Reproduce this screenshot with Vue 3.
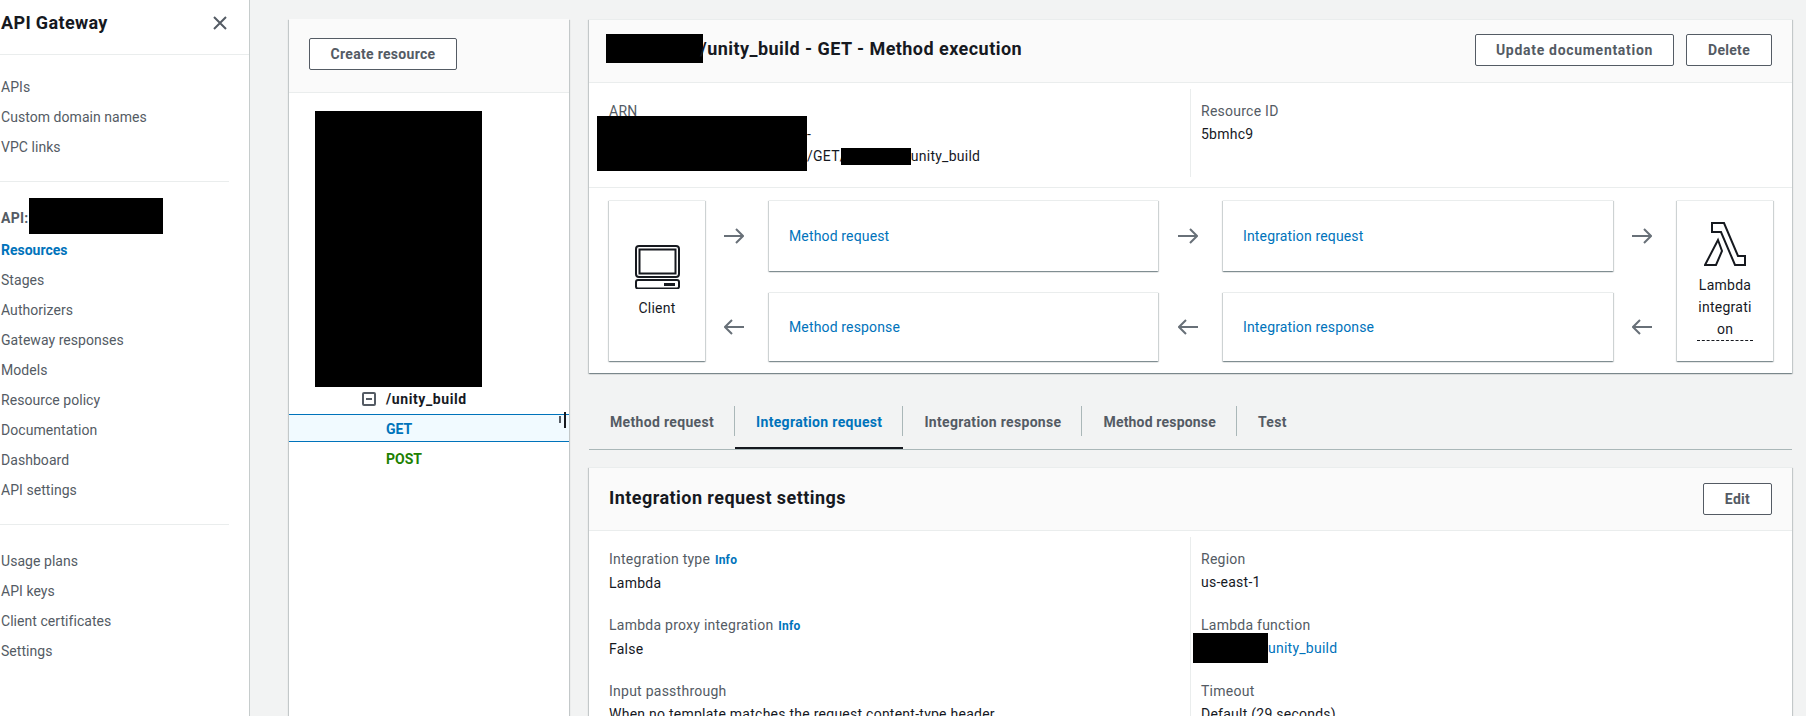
<script setup>
/**
 * API Gateway console: resource tree on the left, GET method execution on the right.
 * Black blocks stand for the redactions in the source picture.
 */
const navTop = ['APIs', 'Custom domain names', 'VPC links']
const navApi = [
  'Resources',
  'Stages',
  'Authorizers',
  'Gateway responses',
  'Models',
  'Resource policy',
  'Documentation',
  'Dashboard',
  'API settings',
]
const navBottom = ['Usage plans', 'API keys', 'Client certificates', 'Settings']

const tabs = ['Method request', 'Integration request', 'Integration response', 'Method response', 'Test']
const activeTab = 'Integration request'

const leftFields = [
  { label: 'Integration type', info: true, value: 'Lambda' },
  { label: 'Lambda proxy integration', info: true, value: 'False' },
  { label: 'Input passthrough', value: 'When no template matches the request content-type header' },
]
</script>

<template>
  <div class="page">
    <aside class="sidebar">
      <header class="side-head">
        <span class="side-title">API Gateway</span>
        <svg class="close" width="14" height="14" viewBox="0 0 14 14">
          <path d="M1 1l12 12M13 1L1 13" />
        </svg>
      </header>
      <nav class="side-section">
        <a v-for="item in navTop" :key="item" class="nav-item">{{ item }}</a>
      </nav>
      <div class="side-rule" />
      <nav class="side-section">
        <div class="api-row">
          <b>API:</b>
          <span class="api-redact" />
        </div>
        <a
          v-for="item in navApi"
          :key="item"
          class="nav-item"
          :class="{ 'nav-item--active': item === 'Resources' }"
        >{{ item }}</a>
      </nav>
      <div class="side-rule" />
      <nav class="side-section">
        <a v-for="item in navBottom" :key="item" class="nav-item">{{ item }}</a>
      </nav>
    </aside>

    <main class="content">
      <section class="tree-panel">
        <div class="tree-head">
          <button class="btn btn--create">Create resource</button>
        </div>
        <div class="tree-redact" />
        <div class="tree-row tree-row--res">
          <svg class="tree-toggle" width="14" height="14" viewBox="0 0 14 14">
            <rect x="1" y="1" width="12" height="12" rx="1" />
            <path d="M4 7h6" />
          </svg>
          <span>/unity_build</span>
        </div>
        <div class="tree-row tree-row--get">
          GET
          <span class="resize-mark" />
        </div>
        <div class="tree-row tree-row--post">POST</div>
      </section>

      <div class="detail">
        <section class="panel">
          <header class="panel-head">
            <div class="exec-title">
              <span class="title-redact" />
              <h2>/unity_build - GET - Method execution</h2>
            </div>
            <div class="actions">
              <button class="btn btn--doc">Update documentation</button>
              <button class="btn btn--delete">Delete</button>
            </div>
          </header>

          <div class="summary">
            <div class="summary-col summary-col--arn">
              <div class="label">ARN</div>
              <div class="arn-line"><span class="arn-gap" />-</div>
              <div class="arn-line">
                <span class="arn-gap" />/GET/<span class="arn-redact" />unity_build
              </div>
              <span class="arn-cover" />
            </div>
            <div class="summary-col summary-col--id">
              <div class="label">Resource ID</div>
              <div class="value">5bmhc9</div>
            </div>
          </div>

          <div class="flow">
            <div class="card card--end card--client">
              <svg class="client-icon" width="45" height="44" viewBox="0 0 45 44">
                <rect x="1" y="1" width="43" height="31" rx="3" />
                <rect x="4.5" y="4.5" width="36" height="24" />
                <rect x="1" y="35" width="43" height="8.5" rx="2" />
                <rect class="slot" x="29" y="38" width="11" height="3" />
              </svg>
              <span>Client</span>
            </div>
            <svg class="arrow" width="20" height="16" viewBox="0 0 20 16"><path d="M0 8h19M12 1l7 7-7 7" /></svg>
            <a class="card card--step">Method request</a>
            <svg class="arrow" width="20" height="16" viewBox="0 0 20 16"><path d="M0 8h19M12 1l7 7-7 7" /></svg>
            <a class="card card--step">Integration request</a>
            <svg class="arrow" width="20" height="16" viewBox="0 0 20 16"><path d="M0 8h19M12 1l7 7-7 7" /></svg>
            <div class="card card--end card--lambda">
              <svg class="lambda-icon" width="42" height="44" viewBox="0 0 42 44">
                <path d="M8 1H20L34 34H41V43H31L17 10H8ZM14 18L18 29L12 43H1Z" />
              </svg>
              <span class="lambda-name">Lambda integration</span>
            </div>
            <svg class="arrow" width="20" height="16" viewBox="0 0 20 16"><path d="M20 8H1M8 1L1 8l7 7" /></svg>
            <a class="card card--step">Method response</a>
            <svg class="arrow" width="20" height="16" viewBox="0 0 20 16"><path d="M20 8H1M8 1L1 8l7 7" /></svg>
            <a class="card card--step">Integration response</a>
            <svg class="arrow" width="20" height="16" viewBox="0 0 20 16"><path d="M20 8H1M8 1L1 8l7 7" /></svg>
          </div>
        </section>

        <div class="tabs">
          <div
            v-for="tab in tabs"
            :key="tab"
            class="tab"
            :class="{ 'tab--active': tab === activeTab }"
          >
            <span class="tab-label">{{ tab }}</span>
          </div>
        </div>

        <section class="panel panel--settings">
          <header class="panel-head">
            <h2>Integration request settings</h2>
            <button class="btn btn--edit">Edit</button>
          </header>
          <div class="settings">
            <div class="settings-col settings-col--left">
              <div v-for="field in leftFields" :key="field.label" class="field">
                <div class="label">
                  {{ field.label }}
                  <a v-if="field.info" class="info">Info</a>
                </div>
                <div class="value">{{ field.value }}</div>
              </div>
            </div>
            <div class="settings-col settings-col--right">
              <div class="field">
                <div class="label">Region</div>
                <div class="value">us-east-1</div>
              </div>
              <div class="field">
                <div class="label">Lambda function</div>
                <div class="value value--link">
                  <span class="fn-redact" />
                  <a>unity_build</a>
                </div>
              </div>
              <div class="field">
                <div class="label">Timeout</div>
                <div class="value">Default (29 seconds)</div>
              </div>
            </div>
          </div>
        </section>
      </div>
    </main>
  </div>
</template>

<style>
html,
body {
  margin: 0;
  background: #f2f3f3;
}
</style>

<style scoped>
.page {
  display: flex;
  height: 716px;
  overflow: hidden;
  background: #f2f3f3;
  color: #16191f;
  font-family: Roboto, "Noto Sans", sans-serif;
  font-size: 14px;
  line-height: 22px;
  letter-spacing: 0.25px;
}

h2 {
  margin: 0 0 2px;
  font-size: 18px;
  font-weight: 700;
  line-height: 26px;
  letter-spacing: 0.45px;
  color: #16191f;
}

/* Side navigation */
.sidebar {
  flex: none;
  width: 250px;
  box-sizing: border-box;
  padding-left: 1px;
  background: #fff;
  border-right: 1px solid #c6cccc;
}

.side-head {
  display: flex;
  align-items: center;
  justify-content: space-between;
  height: 55px;
  margin-left: -1px;
  padding: 0 22px 8px 1px;
  box-sizing: border-box;
  border-bottom: 1px solid #eaeded;
}

.side-title {
  font-size: 18px;
  font-weight: 700;
  letter-spacing: 0.35px;
}

.close path {
  fill: none;
  stroke: #545b64;
  stroke-width: 2;
}

.side-section {
  display: flex;
  flex-direction: column;
  padding: 16px 0 20px;
}

.side-section + .side-rule + .side-section {
  padding-top: 20px;
}

.side-rule {
  width: 229px;
  margin-left: -1px;
  border-top: 1px solid #eaeded;
}

.nav-item {
  height: 30px;
  line-height: 32px;
  color: #545b64;
  letter-spacing: 0.05px;
}

.nav-item--active {
  color: #0073bb;
  font-weight: 700;
  letter-spacing: 0;
}

.api-row {
  position: relative;
  height: 32px;
  line-height: 32px;
  color: #545b64;
}

.api-redact {
  position: absolute;
  left: 28px;
  top: -4px;
  width: 134px;
  height: 36px;
  background: #000;
}

/* Main area */
.content {
  flex: 1;
  display: flex;
  gap: 20px;
  padding: 19px 14px 0 39px;
  min-width: 0;
}

.tree-panel {
  flex: none;
  width: 280px;
  height: 740px;
  background: #fff;
  box-shadow: 0 1px 1px rgba(0, 28, 36, 0.3), 1px 1px 1px rgba(0, 28, 36, 0.15), -1px 1px 1px rgba(0, 28, 36, 0.15);
}

.tree-head {
  height: 74px;
  padding: 19px 20px 0;
  box-sizing: border-box;
  background: #fafafa;
  border-bottom: 1px solid #eaeded;
}

.tree-redact {
  width: 167px;
  height: 276px;
  margin: 18px 0 0 26px;
  background: #000;
}

.tree-row {
  position: relative;
  display: flex;
  align-items: center;
  padding-left: 97px;
  font-weight: 700;
  letter-spacing: 0;
}

.tree-row--res {
  gap: 10px;
  height: 23px;
  margin: 0 0 4px;
  padding-left: 73px;
  letter-spacing: 0.6px;
}

.tree-toggle rect,
.tree-toggle path {
  fill: none;
  stroke: #545b64;
  stroke-width: 2;
}

.tree-row--get {
  height: 28px;
  padding-top: 2px;
  box-sizing: border-box;
  color: #0073bb;
  background: #f1faff;
  border-top: 1px solid #0073bb;
  border-bottom: 1px solid #0073bb;
}

.tree-row--post {
  height: 32px;
  padding-top: 2px;
  box-sizing: border-box;
  color: #1d8102;
}

/* Stray text cursor marks over the selected row */
.resize-mark {
  position: absolute;
  right: 3px;
  top: -3px;
  width: 2px;
  height: 16px;
  background: #16191f;
}

.resize-mark::before {
  content: "";
  position: absolute;
  left: -5px;
  top: 4px;
  width: 2px;
  height: 7px;
  background: #545b64;
}

.detail {
  flex: 1;
  min-width: 0;
}

.panel {
  background: #fff;
  border-top: 1px solid #eaeded;
  box-shadow: 0 1px 1px rgba(0, 28, 36, 0.3), 1px 1px 1px rgba(0, 28, 36, 0.15), -1px 1px 1px rgba(0, 28, 36, 0.15);
}

.panel-head {
  display: flex;
  align-items: center;
  justify-content: space-between;
  height: 63px;
  padding: 0 20px;
  box-sizing: border-box;
  background: #fafafa;
  border-bottom: 1px solid #eaeded;
}

.exec-title {
  display: flex;
  align-items: center;
  margin: 0 0 3px -3px;
}

.exec-title h2 {
  margin-left: -3px;
}

.title-redact {
  flex: none;
  width: 97px;
  height: 29px;
  margin-top: -3px;
  background: #000;
}

.actions {
  display: flex;
  gap: 12px;
  margin-bottom: 3px;
}

.btn {
  height: 32px;
  padding: 0;
  box-sizing: border-box;
  background: #fff;
  border: 1px solid #545b64;
  border-radius: 2px;
  color: #545b64;
  font: inherit;
  font-weight: 700;
  letter-spacing: 0.3px;
}

.btn--create {
  width: 148px;
}

.btn--doc {
  width: 199px;
  letter-spacing: 0.7px;
}

.btn--delete {
  width: 86px;
}

.btn--edit {
  width: 69px;
}

/* ARN + resource id */
.summary {
  display: grid;
  grid-template-columns: 602px 1fr;
  padding: 6px 0 10px;
  border-bottom: 1px solid #eaeded;
}

.summary-col {
  min-height: 88px;
  padding: 11px 20px 0;
  box-sizing: border-box;
}

.summary-col--arn {
  position: relative;
  border-right: 1px solid #eaeded;
}

.summary-col--id {
  padding-left: 10px;
}

.label {
  color: #545b64;
}

.value {
  margin-top: 1px;
}

.arn-line {
  display: flex;
  align-items: center;
  height: 22px;
  white-space: pre;
}

.label + .arn-line {
  margin-top: 1px;
}

.arn-gap {
  flex: none;
  width: 198px;
}

.arn-redact {
  flex: none;
  width: 70px;
  height: 17px;
  margin-left: -5px;
  background: #000;
}

.arn-cover {
  position: absolute;
  left: 8px;
  top: 27px;
  width: 210px;
  height: 55px;
  background: #000;
}

/* Request / response diagram */
.flow {
  display: grid;
  grid-template-columns: 96px 64px 389px 65px 390px 64px 96px;
  grid-template-rows: 71px 69px;
  row-gap: 21px;
  align-items: center;
  justify-items: center;
  padding: 12px 0 12px 20px;
}

.card {
  background: #fff;
  box-sizing: border-box;
  box-shadow: 0 1px 1px rgba(0, 28, 36, 0.3), 1px 1px 1px rgba(0, 28, 36, 0.15), -1px 1px 1px rgba(0, 28, 36, 0.15);
  border-top: 1px solid #eaeded;
}

.card--end {
  grid-row: span 2;
  align-self: stretch;
  justify-self: stretch;
  display: flex;
  flex-direction: column;
  align-items: center;
  text-align: center;
}

.card--step {
  align-self: stretch;
  justify-self: stretch;
  display: flex;
  align-items: center;
  padding-left: 20px;
  color: #0073bb;
  letter-spacing: 0.15px;
}

.flow > .card--client {
  grid-column: 1;
  grid-row: 1 / 3;
  padding-top: 44px;
}

.flow > .card--lambda {
  grid-column: 7;
  grid-row: 1 / 3;
  padding-top: 21px;
}

.client-icon {
  margin-bottom: 8px;
}

.client-icon rect {
  fill: none;
  stroke: #16191f;
  stroke-width: 2;
}

.client-icon .slot {
  fill: #16191f;
  stroke: none;
}

.lambda-icon {
  margin-bottom: 8px;
}

.lambda-icon path {
  fill: none;
  stroke: #16191f;
  stroke-width: 2;
}

.lambda-name {
  display: block;
  width: 56px;
  line-height: 22px;
  overflow-wrap: anywhere;
  border-bottom: 1px dashed #16191f;
}

.arrow {
  margin-right: 6px;
}

.arrow path {
  fill: none;
  stroke: #687078;
  stroke-width: 2;
}

/* Tabs */
.tabs {
  display: flex;
  margin-top: 33px;
  border-bottom: 1px solid #aab7b8;
}

.tab {
  padding-bottom: 11px;
  border-bottom: 2px solid transparent;
  color: #545b64;
  font-weight: 700;
  letter-spacing: 0.33px;
}

.tab:nth-child(4) {
  letter-spacing: 0.18px;
}

.tab-label {
  display: block;
  height: 30px;
  padding: 0 20px 0 21px;
  line-height: 32px;
  border-right: 1px solid #aab7b8;
}

.tab:last-child .tab-label {
  border-right: 0;
}

.tab--active {
  color: #0073bb;
  border-bottom-color: #16191f;
}

/* Settings card */
.panel--settings {
  margin-top: 17px;
  height: 300px;
}

.settings {
  display: grid;
  grid-template-columns: 602px 1fr;
  padding-top: 6px;
}

.settings-col {
  height: 260px;
  padding: 11px 20px 0;
  box-sizing: border-box;
}

.settings-col--left {
  border-right: 1px solid #eaeded;
}

.settings-col--right {
  padding-left: 10px;
}

.field {
  height: 66px;
}

.info {
  margin-left: 1px;
  color: #0073bb;
  font-size: 12px;
  font-weight: 700;
}

.value--link {
  display: flex;
  align-items: center;
  height: 22px;
  color: #0073bb;
}

.fn-redact {
  flex: none;
  width: 75px;
  height: 30px;
  margin-left: -8px;
  background: #000;
}
</style>
